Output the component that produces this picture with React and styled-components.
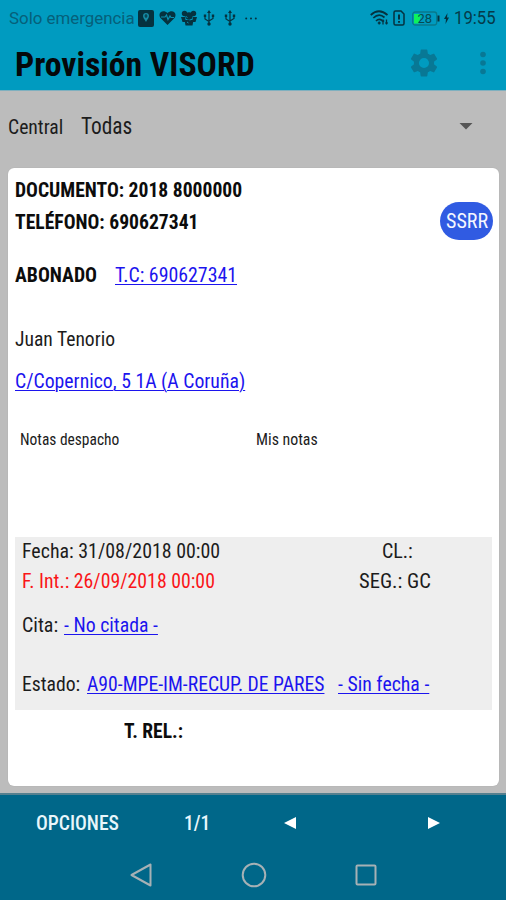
import React, { useLayoutEffect, useRef, useState } from "react";
import styled, { createGlobalStyle } from "styled-components";

const GlobalStyle = createGlobalStyle`
  * { box-sizing: border-box; }
  body { margin: 0; background: #bcbcbc; font-family: "Roboto Condensed", Roboto, "Liberation Sans", sans-serif; }
`;

const Screen = styled.div`
  width: 506px;
  height: 900px;
  display: flex;
  flex-direction: column;
  background: #bcbcbc;
  overflow: hidden;
`;

const Label = styled.span`
  display: block;
  flex: none;
  width: ${(p) => p.$width}px;
  margin-left: ${(p) => p.$gap || 0}px;
  font-family: ${(p) => (p.$regular ? 'Roboto, "Liberation Sans", sans-serif' : "inherit")};
  font-size: ${(p) => p.$size || 20}px;
  font-weight: ${(p) => p.$weight || 400};
  line-height: 24px;
  color: ${(p) => p.$color || "#1c1c1c"};
  white-space: nowrap;
`;

const Glyphs = styled.span`
  display: inline-block;
  transform-origin: 0 50%;
  text-decoration: ${(p) => (p.$link ? "underline" : "none")};
  text-decoration-thickness: 1px;
  text-underline-offset: 2px;
`;

/* Condenses a run of text to the given width. */
function Text({ width, link, children, ...rest }) {
  const ref = useRef(null);
  const [scale, setScale] = useState(1);
  useLayoutEffect(() => {
    setScale(width / ref.current.offsetWidth);
  }, [width, children]);
  const style = { transform: `scaleX(${scale})` };
  return (
    <Label
      $width={width}
      $size={rest.size}
      $weight={rest.weight}
      $gap={rest.gap}
      $regular={rest.regular}
      $color={link ? "#1c14ee" : rest.color}
    >
      <Glyphs ref={ref} $link={link} style={style}>{children}</Glyphs>
    </Label>
  );
}

const Header = styled.header`
  flex: none;
  height: 91px;
  background: #009bc0;
  border-bottom: 1px solid #7fb0bf;
`;

const StatusBar = styled.div`
  height: 36px;
  padding: 0 10px 0 9px;
  display: flex;
  align-items: center;
  justify-content: space-between;
`;

const StatusGroup = styled.div`
  display: flex;
  align-items: center;
`;

const TitleBar = styled.div`
  height: 55px;
  padding: 0 20px 0 15px;
  display: flex;
  align-items: center;
  justify-content: space-between;
`;

const Actions = styled.div`
  display: flex;
  align-items: center;
  gap: 42px;
  margin-top: -2px;
`;

const Filter = styled.div`
  flex: none;
  height: 77px;
  padding: 0 33px 6px 8px;
  display: flex;
  align-items: center;
  justify-content: space-between;
`;

const Card = styled.main`
  flex: none;
  height: 618px;
  margin: 0 7px 0 8px;
  padding: 6px 7px 0;
  background: #fff;
  border-radius: 6px;
  box-shadow: 0 0 1px #9a9a9a;
`;

const Row = styled.div`
  height: ${(p) => p.$height}px;
  padding-top: ${(p) => p.$top || 0}px;
  padding-left: ${(p) => p.$left || 0}px;
  display: flex;
  align-items: center;
`;

const Badge = styled.button`
  flex: none;
  display: flex;
  align-items: center;
  justify-content: center;
  width: 53px;
  height: 38px;
  margin: -2px -1px 0 auto;
  padding: 1px 0 0;
  border: 0;
  border-radius: 19px;
  background: #305be2;
  font-family: inherit;
`;

const Panel = styled.section`
  height: 173px;
  margin-top: 50px;
  background: #eee;
`;

const Footer = styled.footer`
  flex: none;
  height: 107px;
  margin-top: 7px;
  border-top: 2px solid #55808f;
  background: #006789;
`;

const Pager = styled.nav`
  display: flex;
  align-items: center;
  height: 55px;
  padding-left: 36px;
`;

const PageArrow = styled.svg`
  flex: none;
  display: block;
  margin-left: ${(p) => p.$gap}px;
  fill: #fff;
`;

const SystemNav = styled.nav`
  height: 50px;
  padding: 0 129px 0 130px;
  display: flex;
  align-items: center;
  justify-content: space-between;
`;

const Icon = styled.svg`
  flex: none;
  display: block;
  margin-left: ${(p) => p.$gap || 0}px;
`;

const INK = "#05323f";

const Usb = ({ gap }) => (
  <Icon $gap={gap} width="12" height="16" viewBox="0 0 12 16" fill="none" stroke={INK} strokeWidth="1.2">
    <path d="M6 2v12M2 6v3l4 2.5M10 6v2.500l-4 2.500" />
    <path d="M6 0l2 3H4zM.8 4.500h2.400v2.400H.8zM8.800 4.500h2.400v2.400H8.800z" fill={INK} stroke="none" />
    <circle cx="6" cy="14" r="1.700" fill={INK} stroke="none" />
  </Icon>
);

export default function App() {
  return (
    <Screen>
      <GlobalStyle />
      <Header>
        <StatusBar>
          <StatusGroup>
            <Text width={126} size={17} color="#06607a" regular>Solo emergencia</Text>
            <Icon $gap={3} width="16" height="17" viewBox="0 0 16 17">
              <rect width="16" height="17" rx="2" fill={INK} />
              <path d="M8 12C6.500 9 5 8 5 6a3 3 0 0 1 6 0c0 2-1.500 3-3 6z" fill="#168aa4" />
              <path d="M8 4v4M6.500 6h3" stroke={INK} />
            </Icon>
            <Icon $gap={5} width="17" height="16" viewBox="0 0 17 16">
              <path d="M8.500 15L1.500 8C-2 3 4-1.500 8.500 3 13-1.500 19 3 15.500 8z" fill={INK} />
              <path d="M2 7h4l1.500-2L9 9.500 11 6l1 1.500h3" fill="none" stroke="#0991b2" strokeWidth="1.200" />
            </Icon>
            <Icon $gap={5} width="16" height="16" viewBox="0 0 16 16" fill={INK}>
              <circle cx="3.500" cy="3.500" r="2.700" /><circle cx="12.500" cy="3.500" r="2.700" />
              <circle cx="8" cy="6" r="3.700" />
              <path d="M0 7h4l1 5H1.500zM12 7h4l-1.500 5H11zM3.500 10h9l-1 5.500h-7z" />
              <path d="M5 6.500l1.500 1M10.500 9L9 10.500M6 12l1.500 1" stroke="#0991b2" />
            </Icon>
            <Usb gap={6} />
            <Usb gap={9} />
            <Icon $gap={9} width="12" height="3" viewBox="0 0 12 3" fill={INK}>
              <circle cx="1.200" cy="1.500" r="1" /><circle cx="6" cy="1.500" r="1" /><circle cx="10.800" cy="1.500" r="1" />
            </Icon>
          </StatusGroup>
          <StatusGroup>
            <Icon width="19" height="16" viewBox="0 0 19 16" fill="none" stroke={INK} strokeWidth="1.700">
              <path d="M.7 5Q9 -2.500 17.500 5M3.300 8Q9 2.500 14.500 7.500M6 11Q9 8 12 10.500" />
              <path d="M9.200 11.500v3M7.800 13h2.800M13 9.500v5M16.500 9.500v5M11.700 11h2.500M15.300 13h2.500" strokeWidth="1.300" />
            </Icon>
            <Icon $gap={4} width="12" height="16" viewBox="0 0 12 16" fill="none" stroke={INK} strokeWidth="1.500">
              <path d="M1 2.500Q1 1 2.500 1H8l3 3v9.500Q11 15 9.500 15h-7Q1 15 1 13.500z" />
              <path d="M6 4.500v5M6 11v1.800" strokeWidth="2" />
            </Icon>
            <Icon $gap={7} width="28" height="15" viewBox="0 0 28 15">
              <rect x=".7" y="1" width="24" height="13" rx="2.500" fill="none" stroke="#087a8c" strokeWidth="1.300" />
              <path d="M2 3h7l-2 9.500H2z" fill="#0df25c" />
              <path d="M26.500 4.500v6" stroke={INK} strokeWidth="2" />
              <text x="5.500" y="12" fontFamily="Roboto, sans-serif" fontSize="13" fill="#064a51">28</text>
            </Icon>
            <Icon $gap={4} width="5" height="11" viewBox="0 0 5 11" fill={INK}>
              <path d="M3.500 0L0 6h2L1.500 11 5 4.500H3z" />
            </Icon>
            <Text width={42} size={17.5} gap={5} color="#053a49" regular>19:55</Text>
          </StatusGroup>
        </StatusBar>
        <TitleBar>
          <Text width={240} size={34} weight={700} color="#05080a">Provisión VISORD</Text>
          <Actions>
            <Icon width="28" height="28" viewBox="2 2 20 20" fill="#087895">
              <path d="M19.140 12.940c.04-.3.06-.61.06-.94 0-.32-.02-.64-.07-.94l2.030-1.580c.18-.14.23-.41.12-.61l-1.920-3.320c-.12-.22-.37-.29-.59-.22l-2.390.96c-.5-.38-1.030-.7-1.620-.94l-.36-2.540c-.04-.24-.24-.41-.48-.41h-3.840c-.24 0-.43.17-.47.41l-.36 2.540c-.59.24-1.130.57-1.620.94l-2.390-.96c-.22-.08-.47 0-.59.22L2.740 8.870c-.12.21-.08.47.12.61l2.030 1.580c-.05.3-.09.63-.09.94s.02.64.07.94l-2.030 1.580c-.18.14-.23.41-.12.61l1.920 3.320c.12.22.37.29.59.22l2.390-.96c.5.38 1.030.7 1.620.94l.36 2.540c.05.24.24.41.48.41h3.840c.24 0 .44-.17.47-.41l.36-2.540c.59-.24 1.130-.56 1.620-.94l2.390.96c.22.08.47 0 .59-.22l1.920-3.320c.12-.22.07-.47-.12-.61l-2.010-1.580zM12 15.600A3.600 3.600 0 1 1 12 8.400a3.600 3.600 0 0 1 0 7.200z" />
            </Icon>
            <Icon width="6" height="24" viewBox="0 0 6 24" fill="#087895">
              <circle cx="3" cy="3.500" r="2.800" /><circle cx="3" cy="12" r="2.800" /><circle cx="3" cy="20.500" r="2.800" />
            </Icon>
          </Actions>
        </TitleBar>
      </Header>

      <Filter>
        <StatusGroup>
          <Text width={55}>Central</Text>
          <Text width={51} size={23} gap={18}>Todas</Text>
        </StatusGroup>
        <Icon width="14" height="7" viewBox="0 0 14 7" fill="#555"><path d="M.5 0h13L7 6.500z" /></Icon>
      </Filter>

      <Card>
        <Row $height={31}><Text width={227.5} weight={700} color="#0c0c0c">DOCUMENTO: 2018 8000000</Text></Row>
        <Row $height={33}>
          <Text width={183.5} weight={700} color="#0c0c0c">TELÉFONO: 690627341</Text>
          <Badge><Text width={42} size={21} color="#f4f7ff">SSRR</Text></Badge>
        </Row>
        <Row $height={73}>
          <Text width={82} weight={700} color="#0c0c0c">ABONADO</Text>
          <Text width={122} gap={18} link>T.C: 690627341</Text>
        </Row>
        <Row $height={58}><Text width={100.5} size={19.5}>Juan Tenorio</Text></Row>
        <Row $height={24}><Text width={230} link>C/Copernico, 5 1A (A Coruña)</Text></Row>
        <Row $height={94} $left={5}>
          <Text width={99.5} size={16}>Notas despacho</Text>
          <Text width={61.5} size={16} gap={136.5}>Mis notas</Text>
        </Row>
        <Panel>
          <Row $height={28} $left={7}>
            <Text width={198}>Fecha: 31/08/2018 00:00</Text>
            <Text width={31} gap={162}>CL.:</Text>
          </Row>
          <Row $height={32} $left={7}>
            <Text width={193} color="#fa1518">F. Int.: 26/09/2018 00:00</Text>
            <Text width={72} gap={144}>SEG.: GC</Text>
          </Row>
          <Row $height={56} $left={7}>
            <Text width={36}>Cita:</Text>
            <Text width={94} gap={6} link>- No citada -</Text>
          </Row>
          <Row $height={57} $top={5} $left={7}>
            <Text width={58}>Estado:</Text>
            <Text width={237} gap={7} link>A90-MPE-IM-RECUP. DE PARES</Text>
            <Text width={91} gap={14} link>- Sin fecha -</Text>
          </Row>
        </Panel>
        <Row $height={42} $left={109}><Text width={59.5} weight={700} color="#0c0c0c">T. REL.:</Text></Row>
      </Card>

      <Footer>
        <Pager>
          <Text width={83} size={21} weight={500} color="#e8f6fb">OPCIONES</Text>
          <Text width={26} size={21} gap={65} weight={500} color="#e8f6fb">1/1</Text>
          <PageArrow $gap={74} width="12" height="12" viewBox="0 0 12 12"><path d="M12 0v12L0 6z" /></PageArrow>
          <PageArrow $gap={132} width="12" height="12" viewBox="0 0 12 12"><path d="M0 0v12l12-6z" /></PageArrow>
        </Pager>
        <SystemNav>
          <Icon width="22" height="24" viewBox="0 0 22 24" fill="none" stroke="#a6b1b5" strokeWidth="2" strokeLinejoin="round"><path d="M20.500 1.500v21L1.500 12z" /></Icon>
          <Icon width="26" height="26" viewBox="0 0 26 26" fill="none" stroke="#a6b1b5" strokeWidth="2"><circle cx="13" cy="13" r="11.300" /></Icon>
          <Icon width="22" height="22" viewBox="0 0 22 22" fill="none" stroke="#a6b1b5" strokeWidth="2"><rect x="1.500" y="1.500" width="19" height="19" rx="1" /></Icon>
        </SystemNav>
      </Footer>
    </Screen>
  );
}
